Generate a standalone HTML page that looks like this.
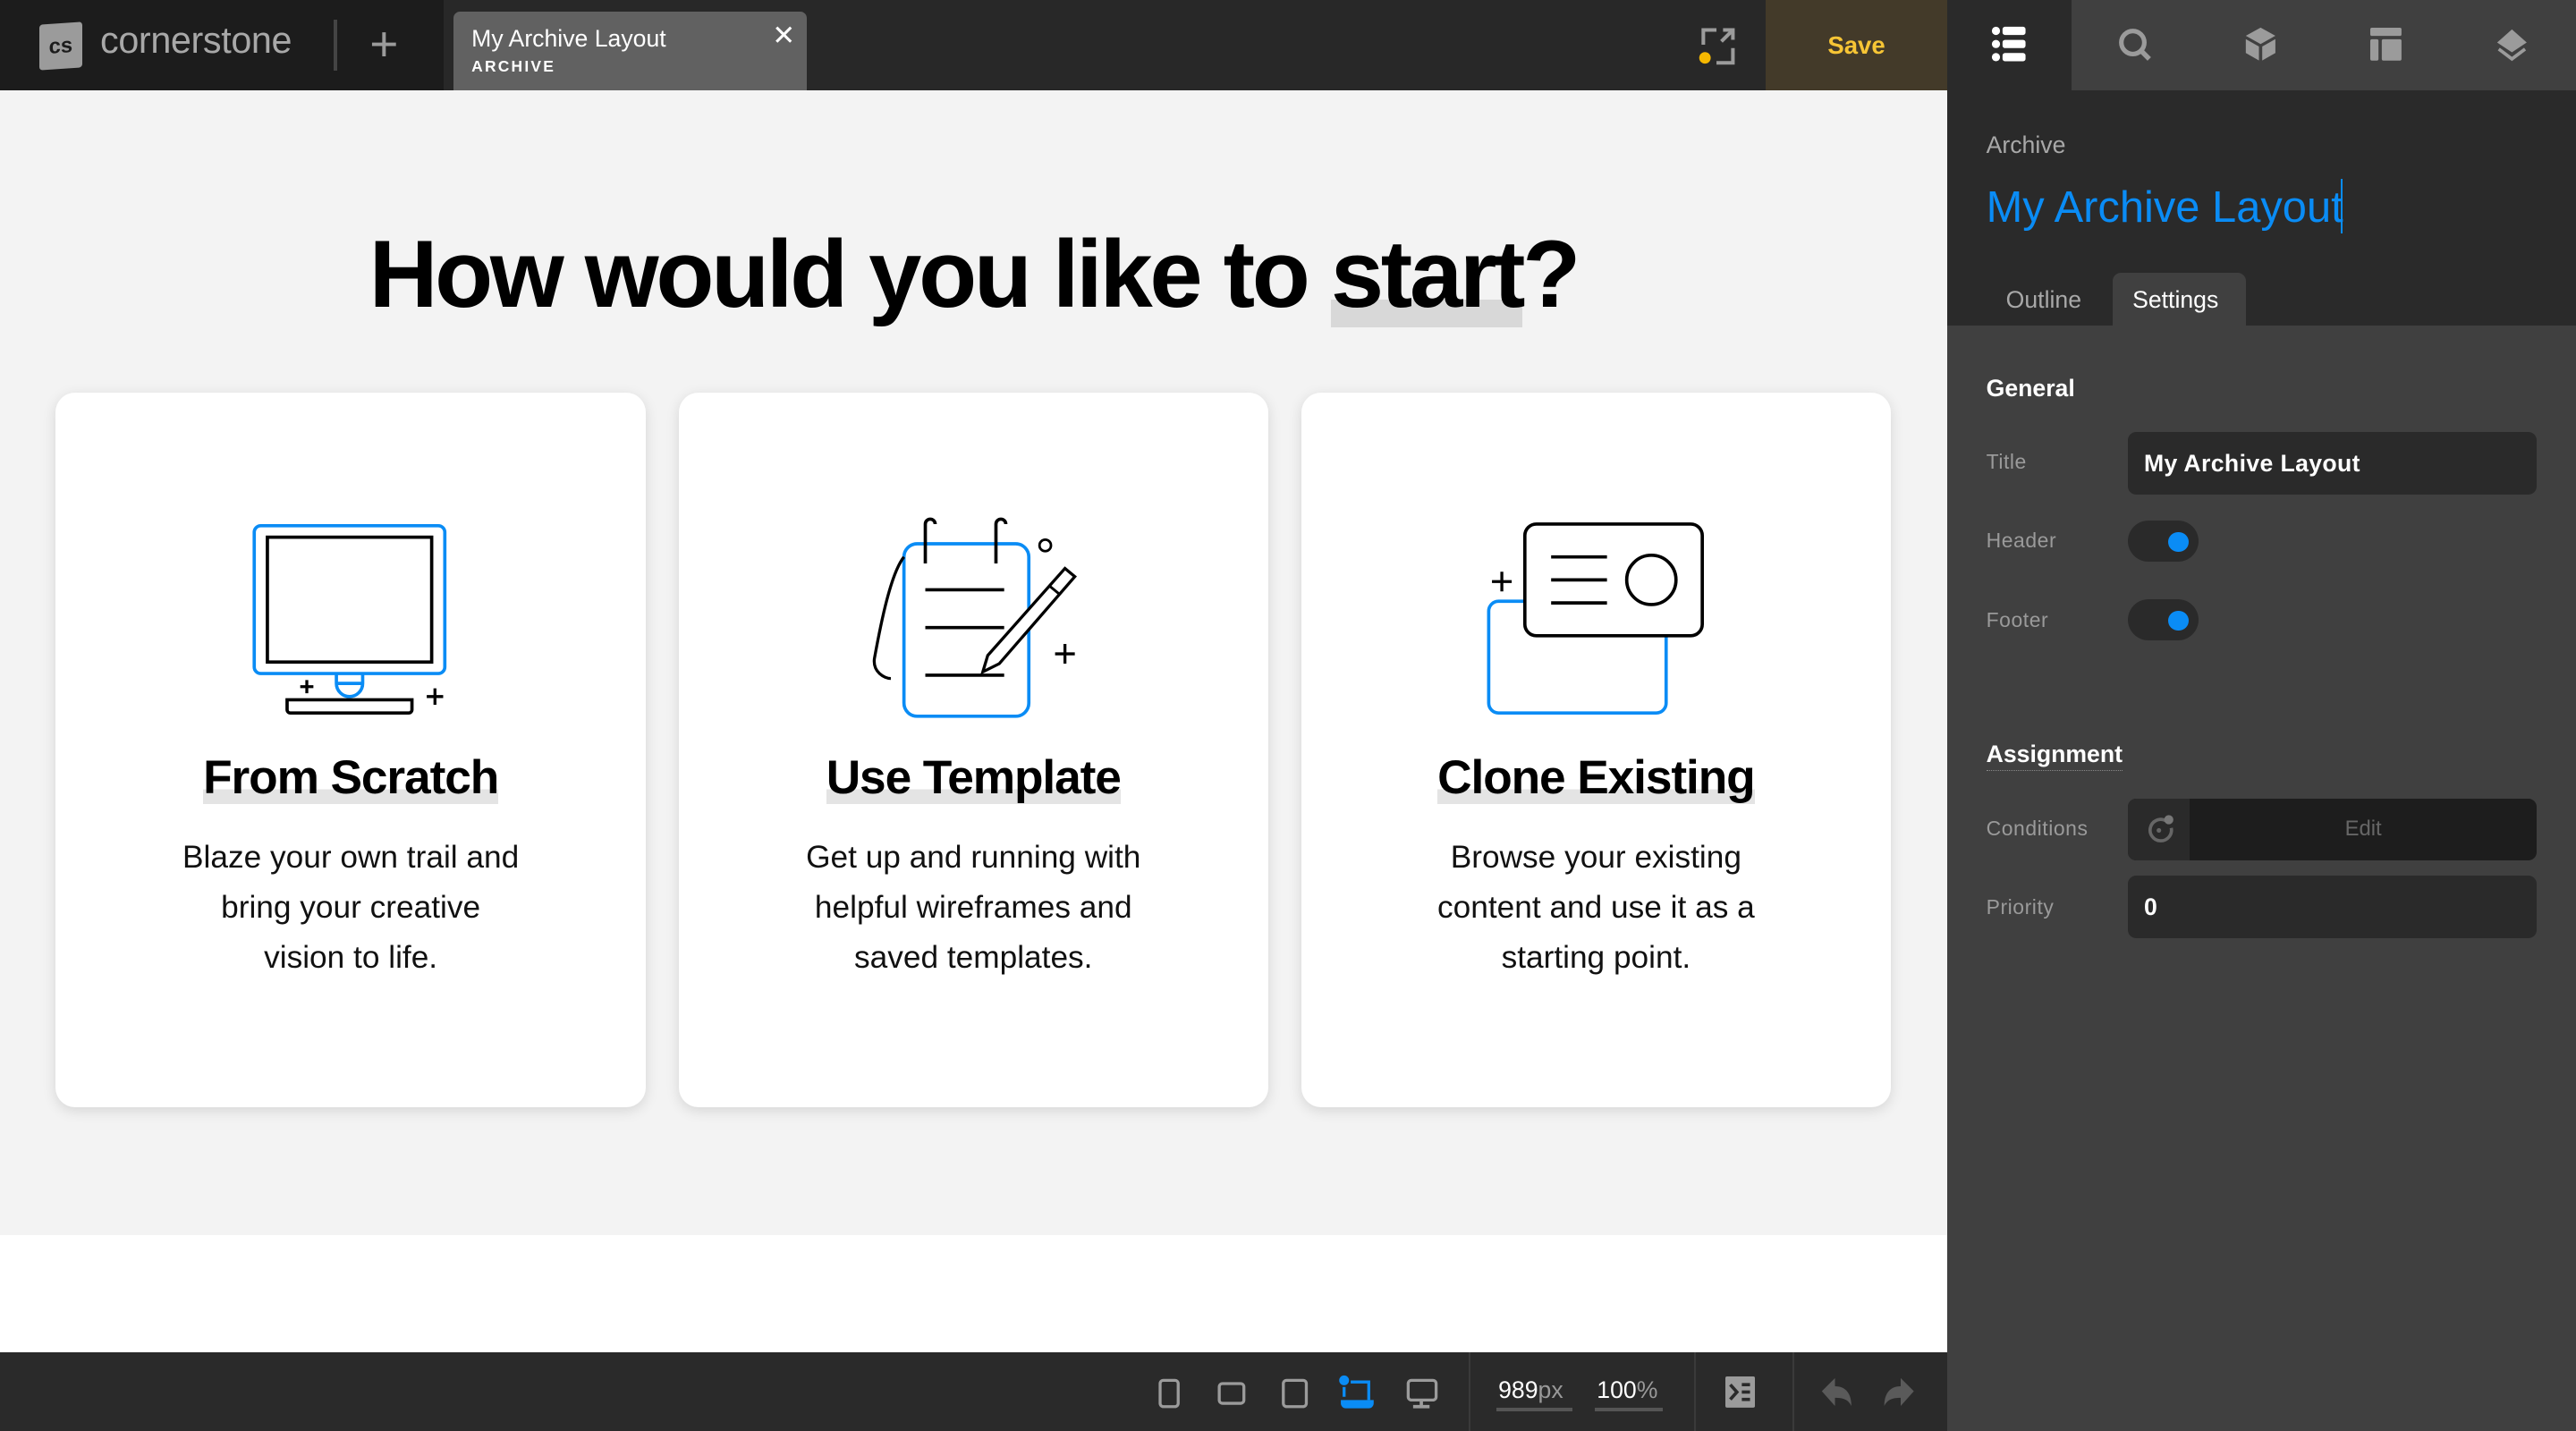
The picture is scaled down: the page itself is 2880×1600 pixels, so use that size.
<!DOCTYPE html>
<html><head><meta charset="utf-8"><style>
html{zoom:1.83674}
*{box-sizing:border-box;margin:0;padding:0}
body{width:1568px;height:871px;overflow:hidden;position:relative;font-family:"Liberation Sans",sans-serif;background:#404040}
.abs{position:absolute}
.top{left:0;top:0;width:1185px;height:55px;background:#282828}
.logo{left:0;top:0;width:270px;height:55px;background:#1c1c1c}
.tab{left:276px;top:7px;width:215px;height:48px;background:#616161;border-radius:4px 4px 0 0;color:#fff}
.canvas{left:0;top:55px;width:1185px;height:697px;background:#f3f3f3}
.white{left:0;top:752px;width:1185px;height:71px;background:#fff}
.bottom{left:0;top:823px;width:1185px;height:48px;background:#2a2a2a}
.card{top:239px;width:359px;height:435px;background:#fff;border-radius:12px;box-shadow:0 2px 8px rgba(0,0,0,.12);text-align:center}
.ct{position:absolute;left:0;right:0;top:218px;font-size:29px;font-weight:bold;letter-spacing:-.6px}
.ct span{background:linear-gradient(transparent 72%,#e4e4e4 72%)}
.cp{position:absolute;left:0;right:0;top:268px;font-size:19.2px;line-height:30.5px;color:#111}
.card svg{position:absolute;left:0;top:0}
.lbl{color:#9a9a9a;font-size:12.5px;left:1209px;letter-spacing:.3px}
.inp{left:1295px;width:249px;height:38px;background:#2a2a2a;border-radius:5px;color:#fff;font-weight:bold;font-size:14.5px;padding:11px 10px;letter-spacing:.2px}
.tog{left:1295px;width:43px;height:25px;background:#2a2a2a;border-radius:13px}
.tog:after{content:"";position:absolute;left:25px;top:7px;width:12px;height:12px;border-radius:6px;background:#0a8cf5}
</style></head><body>
<div class="abs top"></div>
<div class="abs logo"></div>
<div class="abs" style="left:24px;top:14px;width:26px;height:28px;background:#9b9b9b;border-radius:2px;transform:skewY(-4deg);color:#1c1c1c;font-size:13px;font-weight:bold;text-align:center;line-height:28px">cs</div>
<div class="abs" style="left:61px;top:12px;color:#a8a8a8;font-size:22.5px;letter-spacing:-.2px">cornerstone</div>
<div class="abs" style="left:203px;top:12px;width:2px;height:31px;background:#444"></div>
<div class="abs" style="left:225px;top:12px;color:#9b9b9b;font-size:30px;line-height:30px;font-weight:300">+</div>
<div class="abs tab"><div class="abs" style="left:11px;top:8px;font-size:14.5px">My Archive Layout</div><div class="abs" style="left:11px;top:28px;font-size:9.5px;font-weight:bold;letter-spacing:1.2px">ARCHIVE</div><div class="abs" style="left:194px;top:5px;font-size:17px">✕</div></div>
<svg class="abs" style="left:1033px;top:15px" width="26" height="26" viewBox="0 0 26 26"><path d="M4 12V3h8M22 14v9h-10M15 10l7-7M16 3h6v6" fill="none" stroke="#9b9b9b" stroke-width="2.2"/><circle cx="5" cy="20" r="3.5" fill="#f5b800"/></svg>
<div class="abs" style="left:1075px;top:0;width:110px;height:55px;background:#433a29;color:#f7c535;font-weight:bold;font-size:15px;text-align:center;line-height:55px">Save</div>
<div class="abs" style="left:1185px;top:0;width:76px;height:55px;background:#2a2a2a"></div>
<div class="abs" style="left:1261px;top:0;width:307px;height:55px;background:#404040"></div>
<svg class="abs" style="left:1212px;top:16px" width="22" height="22"><g fill="#fff"><circle cx="3" cy="3" r="2.5"/><circle cx="3" cy="11" r="2.5"/><circle cx="3" cy="19" r="2.5"/><rect x="7" y="0.5" width="14" height="5" rx="1.5"/><rect x="7" y="8.5" width="14" height="5" rx="1.5"/><rect x="7" y="16.5" width="14" height="5" rx="1.5"/></g></svg>
<svg class="abs" style="left:1289px;top:17px" width="22" height="22"><circle cx="9" cy="9" r="7" fill="none" stroke="#9b9b9b" stroke-width="2.8"/><path d="M14 14l5 5" stroke="#9b9b9b" stroke-width="3"/></svg>
<svg class="abs" style="left:1366px;top:16px" width="22" height="22"><path d="M10 1l9 5-9 5-9-5z" fill="#9b9b9b"/><path d="M1 8l8 4.5V21l-8-4.5zM19 8l-8 4.5V21l8-4.5z" fill="#9b9b9b"/></svg>
<svg class="abs" style="left:1443px;top:17px" width="22" height="22"><rect x="0" y="0" width="19" height="5" rx="1" fill="#9b9b9b"/><rect x="0" y="7" width="5" height="13" rx="1" fill="#9b9b9b"/><rect x="7" y="7" width="12" height="13" rx="1" fill="#9b9b9b"/></svg>
<svg class="abs" style="left:1519px;top:17px" width="22" height="22"><path d="M10 1l9 8-9 6-9-6z" fill="#9b9b9b"/><path d="M2 13l8 6 8-6" fill="none" stroke="#9b9b9b" stroke-width="2"/></svg>
<div class="abs" style="left:1185px;top:55px;width:383px;height:143px;background:#2a2a2a"></div>
<div class="abs" style="left:1209px;top:80px;color:#a8a8a8;font-size:14.5px">Archive</div>
<div class="abs" style="left:1209px;top:111px;color:#0a8cf5;font-size:26.6px;letter-spacing:0">My Archive Layout</div>
<div class="abs" style="left:1425px;top:109px;width:1px;height:33px;background:#0a8cf5"></div>
<div class="abs" style="left:1286px;top:166px;width:81px;height:32px;background:#404040;border-radius:5px 5px 0 0"></div>
<div class="abs" style="left:1221px;top:174px;color:#a8a8a8;font-size:14.5px">Outline</div>
<div class="abs" style="left:1298px;top:174px;color:#fff;font-size:14.5px">Settings</div>
<div class="abs" style="left:1209px;top:228px;color:#fff;font-weight:bold;font-size:14.5px">General</div>
<div class="abs lbl" style="top:274px">Title</div>
<div class="abs inp" style="top:263px">My Archive Layout</div>
<div class="abs lbl" style="top:322px">Header</div>
<div class="abs tog" style="top:317px"></div>
<div class="abs lbl" style="top:370px">Footer</div>
<div class="abs tog" style="top:365px"></div>
<div class="abs" style="left:1209px;top:451px;color:#fff;font-weight:bold;font-size:14.5px;border-bottom:1px dotted #888;padding-bottom:1px">Assignment</div>
<div class="abs lbl" style="top:497px">Conditions</div>
<div class="abs" style="left:1295px;top:486px;width:249px;height:38px;background:#1d1d1d;border-radius:5px;overflow:hidden"><div class="abs" style="left:0;top:0;width:38px;height:38px;background:#2a2a2a"></div><svg class="abs" style="left:11px;top:10px" width="18" height="18"><path d="M12 3.5A6.5 6.5 0 1 0 15.5 8" fill="none" stroke="#666" stroke-width="2"/><circle cx="14" cy="3" r="2.8" fill="#777"/><circle cx="8" cy="9.5" r="1.4" fill="#666"/></svg><div class="abs" style="left:38px;right:0;top:11px;text-align:center;color:#666;font-size:13px">Edit</div></div>
<div class="abs lbl" style="top:545px">Priority</div>
<div class="abs inp" style="top:533px">0</div>

<div class="abs canvas"></div>
<div class="abs white"></div>
<div class="abs" style="left:0;right:383px;top:134px;text-align:center;font-size:58px;font-weight:bold;letter-spacing:-1.8px;color:#000"><span>How would you like to <span style="background:linear-gradient(transparent 74%,#d8d8d8 74%)">start</span>?</span></div>

<div class="abs card" style="left:34px">
<svg width="359" height="220"><rect x="121" y="81" width="116" height="90" rx="4" fill="none" stroke="#0a8cf5" stroke-width="2"/><rect x="129" y="88" width="100" height="76" fill="none" stroke="#000" stroke-width="2"/><path d="M171 171v6a8 8 0 0 0 16 0v-6M171 177h16" fill="none" stroke="#0a8cf5" stroke-width="2"/><path d="M141 187h76v6a2 2 0 0 1-2 2h-72a2 2 0 0 1-2-2z" fill="none" stroke="#000" stroke-width="2"/><path d="M149 179h8M153 175v8M226 185h10M231 180v10" stroke="#000" stroke-width="1.8"/></svg>
<div class="ct"><span>From Scratch</span></div>
<div class="cp">Blaze your own trail and<br>bring your creative<br>vision to life.</div></div>

<div class="abs card" style="left:413px">
<svg width="359" height="220"><rect x="137" y="92" width="76" height="105" rx="8" fill="none" stroke="#0a8cf5" stroke-width="2"/><path d="M137 100c-8 10-14 40-18 62-1 8 6 12 10 12" fill="none" stroke="#000" stroke-width="1.8"/><path d="M150 104V80a3 3 0 0 1 6 0M193 104V80a3 3 0 0 1 6 0" fill="none" stroke="#000" stroke-width="2"/><path d="M150 120h48M150 143h48M150 172h48" stroke="#000" stroke-width="2"/><path d="M235 107l6 5-46 53-10 5 3-10z" fill="#fff" stroke="#000" stroke-width="1.8"/><path d="M226 118l6 5" stroke="#000" stroke-width="1.6"/><circle cx="223" cy="93" r="3.5" fill="none" stroke="#000" stroke-width="1.5"/><path d="M229 159h12M235 153v12" stroke="#000" stroke-width="1.8"/></svg>
<div class="ct"><span>Use Template</span></div>
<div class="cp">Get up and running with<br>helpful wireframes and<br>saved templates.</div></div>

<div class="abs card" style="left:792px">
<svg width="359" height="220"><rect x="114" y="127" width="108" height="68" rx="6" fill="none" stroke="#0a8cf5" stroke-width="2"/><rect x="136" y="80" width="108" height="68" rx="7" fill="#fff" stroke="#000" stroke-width="2"/><path d="M152 100h34M152 114h34M152 128h34" stroke="#000" stroke-width="2"/><circle cx="213" cy="114" r="15" fill="none" stroke="#000" stroke-width="2"/><path d="M116 115h12M122 109v12" stroke="#000" stroke-width="1.8"/></svg>
<div class="ct"><span>Clone Existing</span></div>
<div class="cp">Browse your existing<br>content and use it as a<br>starting point.</div></div>

<div class="abs bottom"></div>
<svg class="abs" style="left:700px;top:836px" width="180" height="24"><g fill="none" stroke="#9b9b9b" stroke-width="1.8"><rect x="6" y="4" width="11" height="16" rx="2"/><rect x="42" y="6" width="15" height="12" rx="2"/><rect x="81" y="4" width="14" height="16" rx="2"/><rect x="157" y="4" width="17" height="12" rx="2"/></g><path d="M165 16v4M160 20h10" stroke="#9b9b9b" stroke-width="2"/><circle cx="118" cy="4" r="3" fill="#0a8cf5"/><path d="M118 8v6M122 5h11v11" fill="none" stroke="#0a8cf5" stroke-width="1.8"/><path d="M116 16h20v2a3 3 0 0 1-3 3h-14a3 3 0 0 1-3-3z" fill="#0a8cf5"/></svg>
<div class="abs" style="left:894px;top:823px;width:1px;height:48px;background:#3a3a3a"></div>
<div class="abs" style="left:912px;top:838px;color:#fff;font-size:14.5px">989<span style="color:#999">px</span></div>
<div class="abs" style="left:911px;top:857px;width:46px;height:2px;background:#555"></div>
<div class="abs" style="left:972px;top:838px;color:#fff;font-size:14.5px">100<span style="color:#999">%</span></div>
<div class="abs" style="left:971px;top:857px;width:41px;height:2px;background:#555"></div>
<div class="abs" style="left:1031px;top:823px;width:1px;height:48px;background:#3a3a3a"></div>
<svg class="abs" style="left:1050px;top:838px" width="18" height="19"><rect width="18" height="19" rx="1" fill="#9b9b9b"/><path d="M3 5l4 4.5-4 4.5M10 5h5M10 9.5h5M10 14h5" fill="none" stroke="#2a2a2a" stroke-width="2"/></svg>
<div class="abs" style="left:1091px;top:823px;width:1px;height:48px;background:#3a3a3a"></div>
<svg class="abs" style="left:1108px;top:838px" width="60" height="20"><path d="M1 9l8-8v5c7 0 10 5 10 12-2-4-5-5-10-5v5z" fill="#5a5a5a"/><path d="M57 9l-8-8v5c-7 0-10 5-10 12 2-4 5-5 10-5v5z" fill="#5a5a5a"/></svg>
</body></html>
